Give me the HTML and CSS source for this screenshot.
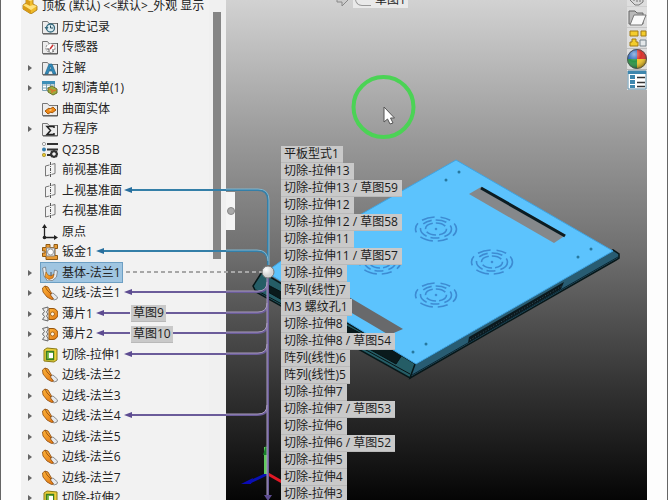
FILE: index.html
```html
<!DOCTYPE html>
<html lang="zh-CN">

<head>
    <meta charset="UTF-8">
    <meta name="viewport" content="width=device-width, initial-scale=1.0">
    <title>顶板</title>
    <link rel="stylesheet" href="styles.css">
</head>

<body>
    <svg class="defs" aria-hidden="true">
        <defs>
            <linearGradient id="gold" x1="0" y1="0" x2="1" y2="1">
                <stop offset="0" stop-color="#ffb53c" />
                <stop offset="1" stop-color="#df7410" />
            </linearGradient>
            <radialGradient id="pearl" cx=".35" cy=".3">
                <stop offset="0" stop-color="#fff" />
                <stop offset="1" stop-color="#d2d2d2" />
            </radialGradient>
            <radialGradient id="shine" cx=".35" cy=".25" r=".75">
                <stop offset="0" stop-color="#fff" stop-opacity=".55" />
                <stop offset=".5" stop-color="#fff" stop-opacity="0" />
                <stop offset="1" stop-color="#000" stop-opacity=".35" />
            </radialGradient>
        </defs>

        <symbol id="folder" viewBox="0 0 16 16">
            <path d="M.5 2.500h5l1.500 2h8.500v10H.5z" fill="#ececec" stroke="#777" />
            <path d="M15.500 4v11H1" fill="none" stroke="#555" />
        </symbol>
        <symbol id="part" viewBox="0 0 16 16">
            <path d="M1 7 4 5V1l3-1 4 2v4l4 2v4l-6 4-8-5z" fill="#f0bb29" stroke="#a57411" stroke-width=".8" />
            <path d="m4 1 4 2v5l-4-2zM1 7l8 5v4l-8-5z" fill="#d99c16" />
            <path d="m4 1 3-1 4 2-3 1zM1 7l3-1 4 2 3-1 4 1-6 4z" fill="#ffe27d" />
        </symbol>
        <symbol id="history" viewBox="0 0 16 16">
            <use href="#folder" />
            <circle cx="8.500" cy="9" r="4" fill="#dcecf1" stroke="#35697d" stroke-width="1.300" />
            <path d="M8.500 6.500V9H11" fill="none" stroke="#244b5c" />
            <path d="m2.500 8 2 3 2-3z" fill="#35697d" />
        </symbol>
        <symbol id="sensor" viewBox="0 0 16 16">
            <use href="#folder" />
            <circle cx="8.500" cy="9" r="4.500" fill="#fff" stroke="#858585" stroke-dasharray="2 1" />
            <path d="m8 10 3-4" stroke="#c33" stroke-width="1.500" />
            <path d="M5 10h2v3m4-3v3" fill="none" stroke="#555" />
        </symbol>
        <symbol id="note" viewBox="0 0 16 16">
            <use href="#folder" />
            <path d="m3 14 4-10h3l4 10h-3l-1-3H7l-1 3zm4.500-5h2L8.500 6z" fill="#3189b8" stroke="#1f5f83" stroke-width=".6" />
        </symbol>
        <symbol id="cutlist" viewBox="0 0 16 16">
            <path d="M.5 1.500h12v9H.5zM.5 5h12M.5 8h12M4.500 2v8M8.500 2v8" fill="#fff" stroke="#7ba1b4" />
            <path d="M0 1h13v3H0z" fill="#3d8fb8" />
            <path d="m6 8 4-2 5 3v4l-4 2-5-3z" fill="#9cae40" stroke="#69702a" />
            <path d="m7 9 3 1v3M11 11l3-1" fill="none" stroke="#d8762c" stroke-width="1.500" />
        </symbol>
        <symbol id="surface" viewBox="0 0 16 16">
            <use href="#folder" />
            <path d="m3 10 4-3 1 1 3-2 3 3-4 3-1-1-3 2z" fill="#f08a18" stroke="#a65a0b" />
            <path d="m7 9 2-1 1 1-2 1z" fill="#ffd08a" />
        </symbol>
        <symbol id="sigma" viewBox="0 0 16 16">
            <use href="#folder" />
            <path d="M12 7V5.500H5L8.500 9.500 5 13.500h7V12" fill="none" stroke="#222" stroke-width="1.500" />
        </symbol>
        <symbol id="material" viewBox="0 0 16 16">
            <path d="M5 2h11M5 7.500h11M5 13h5" stroke="#333" stroke-width="1.800" />
            <circle cx="2" cy="2" r="1.600" fill="#fff" stroke="#888" stroke-width=".8" />
            <circle cx="2" cy="7.500" r="2" fill="#347dac" />
            <circle cx="2" cy="13" r="1.700" fill="#e6c52c" stroke="#8c7a1c" stroke-width=".6" />
            <circle cx="12" cy="12" r="2.800" fill="none" stroke="#333" stroke-width="2" />
            <path d="M12 7.500v2m0 5V16m-4-4h2m4 0h2M9 9l1.500 1.500m3 3L15 15M9 15l1.500-1.500m3-3L15 9" stroke="#333" stroke-width="1.300" />
        </symbol>
        <symbol id="plane" viewBox="0 0 16 16">
            <path d="M3.500 4 13 1.500v10L3.500 14z" fill="none" stroke="#777" />
            <path d="M8.500 0v16" stroke="#f2f2f2" stroke-width="2" />
            <path d="M8.500 0v16" stroke="#555" stroke-dasharray="3 1 1 1" />
        </symbol>
        <symbol id="origin" viewBox="0 0 16 16">
            <path d="M2.500 2v11.500H14" fill="none" stroke="#222" stroke-width="1.300" />
            <path d="m0 4 2.500-4L5 4zM12 11l4 2.500-4 2.500z" fill="#222" />
            <circle cx="2.500" cy="13.500" r="1.800" fill="#222" />
        </symbol>
        <symbol id="sheet" viewBox="0 0 16 16">
            <path d="M4 .5h4v3h4v-3h3.500v4H13v7h2.500v4H4v-3H.5V9H3V7H.5V3.500H4z" fill="#e79a35" stroke="#8f5a14" />
            <path d="M4.500 4h8v8h-8z" fill="#eee" stroke="#8a8a8a" />
            <circle cx="8.500" cy="8" r="3" fill="#fff" stroke="#999" />
        </symbol>
        <symbol id="base" viewBox="0 0 16 16">
            <path d="m.5 3 3-1 1 7 3 3 4-1 1-6 3 1-1 6-4 3.500-5 .5L2 11z" fill="#e7eaec" stroke="#737a80" stroke-width=".8" />
            <path d="m4 7 2 3 3 1 3-2-1 4-4 1.500L3 12z" fill="url(#gold)" stroke="#9c5b10" stroke-width=".6" />
            <path d="M9 7v4" stroke="#555" />
        </symbol>
        <symbol id="edge" viewBox="0 0 16 16">
            <path d="m8 9 3-1 4.500 4-.5 2-3 1-5-3z" fill="#e6e8eb" stroke="#777" stroke-width=".8" />
            <path d="M.5 3 3 1l3 1 3.500 6-1 2 3 4-2 .5L5 12 1 7z" fill="url(#gold)" stroke="#8d4a0b" stroke-width=".8" />
            <path d="m3 1 2 4 4 4" fill="none" stroke="#8d4a0b" stroke-width=".8" />
        </symbol>
        <symbol id="tab" viewBox="0 0 16 16">
            <path d="M.5 2.500 6 1v3L4.500 6 6 8l-1.500 2L6 12v3L.5 13.500l2-3-2-2.500 2-2.500z" fill="#ececec" stroke="#666" />
            <path d="M7 2.500h4a5 5.500 0 0 1 0 11H7z" fill="url(#gold)" stroke="#96540c" />
            <circle cx="10.500" cy="8" r="2" fill="#fff4df" stroke="#96540c" stroke-width=".8" />
        </symbol>
        <symbol id="cut" viewBox="0 0 16 16">
            <path d="m2 3 3-2 10 1v11l-3 2-10-1z" fill="#edcf38" stroke="#8a7b14" />
            <path d="M4.500 4.500h7v8h-7z" fill="#7fc04a" stroke="#3a7b24" stroke-width="1.400" />
            <path d="M7 6h4v5H7z" fill="#fff" />
        </symbol>
    </svg>

    <main class="app">
        <nav class="tree-pane" aria-label="特征树">
            <ul class="tree">
                <li class="row root"><svg class="icon"><use href="#part" /></svg><span>顶板 (默认) &lt;&lt;默认&gt;_外观 显示</span></li>
                <li class="row"><svg class="icon"><use href="#history" /></svg><span>历史记录</span></li>
                <li class="row"><svg class="icon"><use href="#sensor" /></svg><span>传感器</span></li>
                <li class="row has-child"><svg class="icon"><use href="#note" /></svg><span>注解</span></li>
                <li class="row has-child"><svg class="icon"><use href="#cutlist" /></svg><span>切割清单(1)</span></li>
                <li class="row"><svg class="icon"><use href="#surface" /></svg><span>曲面实体</span></li>
                <li class="row has-child"><svg class="icon"><use href="#sigma" /></svg><span>方程序</span></li>
                <li class="row"><svg class="icon"><use href="#material" /></svg><span>Q235B</span></li>
                <li class="row"><svg class="icon"><use href="#plane" /></svg><span>前视基准面</span></li>
                <li class="row"><svg class="icon"><use href="#plane" /></svg><span>上视基准面</span></li>
                <li class="row"><svg class="icon"><use href="#plane" /></svg><span>右视基准面</span></li>
                <li class="row"><svg class="icon"><use href="#origin" /></svg><span>原点</span></li>
                <li class="row"><svg class="icon"><use href="#sheet" /></svg><span>钣金1</span></li>
                <li class="row has-child selected"><svg class="icon"><use href="#base" /></svg><span>基体-法兰1</span></li>
                <li class="row has-child"><svg class="icon"><use href="#edge" /></svg><span>边线-法兰1</span></li>
                <li class="row has-child"><svg class="icon"><use href="#tab" /></svg><span>薄片1</span><span class="tag sketch">草图9</span></li>
                <li class="row has-child"><svg class="icon"><use href="#tab" /></svg><span>薄片2</span><span class="tag sketch">草图10</span></li>
                <li class="row has-child"><svg class="icon"><use href="#cut" /></svg><span>切除-拉伸1</span></li>
                <li class="row has-child"><svg class="icon"><use href="#edge" /></svg><span>边线-法兰2</span></li>
                <li class="row has-child"><svg class="icon"><use href="#edge" /></svg><span>边线-法兰3</span></li>
                <li class="row has-child"><svg class="icon"><use href="#edge" /></svg><span>边线-法兰4</span></li>
                <li class="row has-child"><svg class="icon"><use href="#edge" /></svg><span>边线-法兰5</span></li>
                <li class="row has-child"><svg class="icon"><use href="#edge" /></svg><span>边线-法兰6</span></li>
                <li class="row has-child"><svg class="icon"><use href="#edge" /></svg><span>边线-法兰7</span></li>
                <li class="row has-child"><svg class="icon"><use href="#cut" /></svg><span>切除-拉伸2</span></li>
            </ul>
            <div class="scroll"><div class="thumb"></div></div>
        </nav>

        <section class="view">
            <svg class="model" viewBox="226 0 421 500" preserveAspectRatio="xMinYMin slice">
                <defs>
                    <g id="fan" fill="none" stroke="#3d8bd2" stroke-width="1.600">
                        <ellipse rx="10.500" ry="6" stroke-dasharray="10 3" />
                        <ellipse rx="15.500" ry="9" stroke-dasharray="11 5 9 4" />
                        <ellipse rx="20.500" ry="12" stroke-dasharray="13 6 10 5" stroke-dashoffset="5" />
                        <circle r=".5" />
                    </g>
                </defs>
                <!-- side walls -->
                <path d="m262 272-9 14 3 6 154 86 6-14z" fill="#255d66" stroke="#071719" stroke-width="1.500" />
                <path d="m256 290 154 84M268 285l134 70-6 9-128-72z" fill="#0a1a1c" stroke="#061214" />
                <path d="m415 364-5 14 206-118 3-2v-4l-6-4z" fill="#285c72" stroke="#071719" stroke-width="1.500" />
                <path d="m412 375 206-118" stroke="#0c2530" />
                <path d="m469 337 95-55-3 7-93 54z" fill="#0b191e" />
                <path d="m470 340 92-54" stroke="#385461" stroke-dasharray="1 2" />
                <!-- top face -->
                <path d="m456 160 157 91-197 113-150-92 22-16z" fill="#5cc3fd" stroke="#3fa4e2" />
                <!-- slots -->
                <path d="m469 194 12-7 85 48-12 8z" fill="#85888b" />
                <path d="m481 188 84 48" stroke="#0b1c22" stroke-width="3" />
                <path d="m305 271 98 58-14 6-98-58z" fill="#68696b" />
                <use href="#fan" x="436" y="229" />
                <use href="#fan" x="492" y="262" />
                <use href="#fan" x="436" y="295" />
                <use href="#fan" x="380" y="262" />
                <g fill="#27789f">
                    <circle cx="459" cy="172" r="1.500" /><circle cx="446" cy="180" r="1.500" />
                    <circle cx="591" cy="249" r="1.500" /><circle cx="578" cy="257" r="1.500" />
                    <circle cx="426" cy="344" r="1.500" /><circle cx="413" cy="352" r="1.500" />
                </g>
                <!-- axis triad -->
                <path d="m267 474-17 8" stroke="#0911b5" stroke-width="3" />
                <path d="m241 484 12-6-2 6z" fill="#0b0bb5" />
                <path d="m268 474 14 8" stroke="#e01825" stroke-width="3" />
                <path d="M266 474v-27" stroke="#61ca60" stroke-width="4" />
                <path d="m263 455 3-10 3 10z" fill="#18802a" />
                <!-- pointer -->
                <circle cx="383.500" cy="107" r="30" fill="none" stroke="#4bd355" stroke-width="4" />
                <path d="M384 107v15l3.500-3 2.500 5 3-1-2.500-5h4z" fill="#fff" stroke="#555" />
                <path d="M337-3h5v-3l6 6-6 6V2h-5z" fill="#ccc" stroke="#888" />
            </svg>

            <div class="crumb"><span class="pill"></span>草图1</div>
            <button class="splitter" aria-label="折叠面板"></button>

            <ul class="children">
                <li class="tag">平板型式1</li>
                <li class="tag">切除-拉伸13</li>
                <li class="tag">切除-拉伸13 / 草图59</li>
                <li class="tag">切除-拉伸12</li>
                <li class="tag">切除-拉伸12 / 草图58</li>
                <li class="tag">切除-拉伸11</li>
                <li class="tag">切除-拉伸11 / 草图57</li>
                <li class="tag">切除-拉伸9</li>
                <li class="tag">阵列(线性)7</li>
                <li class="tag">M3 螺纹孔1</li>
                <li class="tag">切除-拉伸8</li>
                <li class="tag">切除-拉伸8 / 草图54</li>
                <li class="tag">阵列(线性)6</li>
                <li class="tag">阵列(线性)5</li>
                <li class="tag">切除-拉伸7</li>
                <li class="tag">切除-拉伸7 / 草图53</li>
                <li class="tag">切除-拉伸6</li>
                <li class="tag">切除-拉伸6 / 草图52</li>
                <li class="tag">切除-拉伸5</li>
                <li class="tag">切除-拉伸4</li>
                <li class="tag">切除-拉伸3</li>
            </ul>

            <div class="tasks">
                <button class="task" aria-label="资源"><svg viewBox="0 0 20 20">
                    <path d="M3 9h13v7l-4 3H8l-5-5zM7 9v6m3-6v7m3-7v7" fill="#d8d8d8" stroke="#777" />
                </svg></button>
                <button class="task" aria-label="文件探索器"><svg viewBox="0 0 20 20">
                    <path d="M2 4h6l2 2h6v11H2z" fill="#b9b9b9" stroke="#666" />
                    <path d="M7 8h12l-4 10H3z" fill="#fafafa" stroke="#777" />
                </svg></button>
                <button class="task" aria-label="视图调色板"><svg viewBox="0 0 20 20">
                    <path d="M3 3h8v5H3zM14 3h5v5h-5zM5 11h4v3h2v4H3v-4h2z" fill="#f4cd2c" stroke="#a17b15" />
                    <path d="M13 12h6v6h-6z" fill="#e4e8ea" stroke="#76838b" />
                </svg></button>
                <button class="task" aria-label="外观"><svg viewBox="0 0 20 20">
                    <path d="M10 10V0A10 10 0 0 0 0 10z" fill="#2867bd" />
                    <path d="M10 10h10A10 10 0 0 0 10 0z" fill="#d9302a" />
                    <path d="M10 10H0a10 10 0 0 0 10 10z" fill="#2b9445" />
                    <path d="M10 10v10a10 10 0 0 0 10-10z" fill="#f1c629" />
                    <circle cx="10" cy="10" r="9.500" fill="url(#shine)" stroke="#555" />
                </svg></button>
                <button class="task" aria-label="自定义属性"><svg viewBox="0 0 20 20">
                    <path d="M1 1h18v18H1z" fill="#fff" stroke="#5c8da8" />
                    <path d="M1 1h18v3H1zM3 5h5v4H3zm0 5h5v4H3zm0 5h5v3H3z" fill="#3e87ae" />
                    <path d="M10 7.500h8m-8 5h8m-8 4h8" stroke="#333" stroke-width="1.500" />
                </svg></button>
            </div>
        </section>

        <!-- parent / child reference lines -->
        <svg class="links" width="290" height="500" viewBox="0 0 290 500">
            <g fill="none" stroke-width="2">
                <path d="M130 190h128q10 0 10 10v65M102 251h155q11 0 11 11" stroke="#347fa8" />
                <path d="M226 189h32q11 0 11 11v65M226 250h31q11 0 11 11" stroke="#80b6cf" stroke-width="1" />
                <path d="M130 292h127q11 0 11-10M102 313h28m36 0h91q11 0 11-10M102 333h28m43 0h84q11 0 11-10M130 354h127q11 0 11-10M130 415h127q11 0 11-10M268 276v220" stroke="#6b5c9a" />
                <path d="M226 291h32q9 0 9-9M226 312h32q9 0 9-9M226 332h32q9 0 9-9M226 353h32q9 0 9-9M226 414h32q9 0 9-9M267 276v220" stroke="#a89bbb" stroke-width="1" />
                <path d="M126 272h136" stroke="#a7a7a7" stroke-dasharray="4 3" />
            </g>
            <path d="m124 190 8-3v6zM96 251l8-3v6z" fill="#286f9e" />
            <path d="m124 292 8-3v6zM96 313l8-3v6zM96 333l8-3v6zM124 354l8-3v6zM124 415l8-3v6zM264 495h8l-4 6z" fill="#5d4c91" />
            <circle cx="268" cy="272" r="6" fill="url(#pearl)" stroke="#777" />
        </svg>
    </main>
</body>

</html>
```
FILE: styles.css
```css
* {
    box-sizing: border-box;
    margin: 0;
    padding: 0;
}

body {
    background: #fdfdfd;
    color: #222;
    font: 12px/16px "Open Sans", "Noto Sans CJK SC", sans-serif;
    overflow: hidden;
}

ul {
    list-style: none;
}

button {
    border: 0;
}

.defs {
    position: absolute;
    width: 0;
    height: 0;
}

.app {
    position: relative;
    display: flex;
    height: 100vh;
    padding: 0 20px;
    border-left: 1px solid #666;
    border-right: 1px solid #666;
    overflow: hidden;
}

/* feature tree */
.tree-pane {
    display: flex;
    flex: 0 0 205px;
    min-width: 0;
    background: #f2f2f2;
}

.tree {
    flex: 1;
    min-width: 0;
    margin-top: -4px;
}

.row {
    position: relative;
    display: flex;
    align-items: center;
    gap: 4px;
    height: 20px;
    padding-left: 21px;
    white-space: nowrap;
}

.row:nth-child(even) {
    height: 21px;
}

.root {
    padding-left: 1px;
    overflow: hidden;
}

.icon {
    flex: none;
    width: 16px;
    height: 16px;
}

.has-child::before {
    content: "";
    position: absolute;
    left: 7px;
    border: 3px solid transparent;
    border-left: 4px solid #666;
    border-right: 0;
}

.selected {
    width: 83px;
    margin-left: 19px;
    padding-left: 1px;
    background: #9fc5e1;
    border: 1px solid #6d9fc3;
}

.selected::before {
    left: -13px;
}

.scroll {
    flex: none;
    width: 17px;
    padding: 12px 5px 0 4px;
    background: #f0f0f0;
}

.thumb {
    height: 247px;
    background: #858585;
}

.tag {
    height: 17px;
    padding: 0 4px 0 3px;
    background: #c9c9c9;
    border-bottom: 1px solid #b9b9b9;
    color: #1c1c1c;
    white-space: nowrap;
}

.sketch {
    position: absolute;
    left: 110px;
    padding: 0 2px;
}

/* graphics area */
.view {
    position: relative;
    flex: 1;
    background: linear-gradient(#d2d2d2 0, #999 28%, #707070 50%, #343434 77%, #050505 100%);
    overflow: hidden;
}

.model {
    position: absolute;
    top: 0;
    left: 0;
    width: 100%;
    height: 100%;
}

.crumb {
    position: absolute;
    top: -8px;
    left: 127px;
    display: flex;
    gap: 4px;
    padding: 0 2px;
    background: #e9e9e9;
}

.pill {
    width: 16px;
    height: 14px;
    border: 1px solid #999;
    border-radius: 0 0 0 7px;
    border-right: 0;
}

.splitter {
    position: absolute;
    top: 192px;
    left: 0;
    width: 9px;
    height: 38px;
    background: #f4f4f4;
}

.splitter::after {
    content: "";
    display: block;
    width: 6px;
    height: 6px;
    margin: 0 auto;
    background: #aaa;
    border: 1px solid #888;
    border-radius: 50%;
}

.children {
    position: absolute;
    top: 146px;
    left: 55px;
    display: flex;
    flex-direction: column;
    align-items: flex-start;
}

.tasks {
    position: absolute;
    top: -14px;
    right: 0;
    display: grid;
    gap: 1px;
}

.task {
    width: 20px;
    height: 20px;
    background: #dedede;
}

.task svg {
    display: block;
    width: 20px;
    height: 20px;
}

.links {
    position: absolute;
    top: 0;
    left: -1px;
    pointer-events: none;
}
```
